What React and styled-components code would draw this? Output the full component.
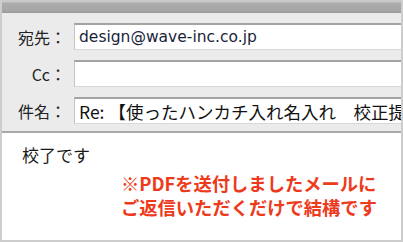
import React from "react";
import styled, { createGlobalStyle } from "styled-components";

const GlobalStyle = createGlobalStyle`
  html, body {
    margin: 0;
    padding: 0;
    background: #fff;
  }
  body {
    font-family: "DejaVu Sans", "Noto Sans CJK JP", sans-serif;
  }
`;

const Frame = styled.div`
  width: 403px;
  height: 242px;
  box-sizing: border-box;
  border: 2px solid #cdcdcd;
  border-top: none;
  display: flex;
  flex-direction: column;
  overflow: hidden;
  background: #fff;
`;

const TitleBar = styled.div`
  height: 13px;
  flex-shrink: 0;
  margin: 0 -2px;
  background: linear-gradient(#c9c9c9 0, #c9c9c9 2px, #acacac 3px, #a6a6a6 11px, #979797 13px);
`;

const Header = styled.div`
  background: #ebebeb;
  padding: 10px 0 7px;
  display: flex;
  flex-direction: column;
  gap: 10px;
  border-bottom: 2px solid #a9a9a9;
`;

const Row = styled.div`
  display: flex;
  align-items: center;
  height: 27px;
`;

const Label = styled.div`
  width: 64px;
  flex-shrink: 0;
  text-align: right;
  font-family: "Noto Sans CJK JP", sans-serif;
  font-size: 16px;
  color: #222;
  padding-right: 8px;
`;

const Field = styled.div`
  flex: 1;
  height: 27px;
  box-sizing: border-box;
  background: #fff;
  border-top: 2px solid #a3a3a3;
  border-left: 1px solid #c4c4c4;
  border-bottom: 1px solid #d8d8d8;
  padding-left: 4px;
  display: flex;
  align-items: center;
  white-space: nowrap;
  overflow: hidden;
  font-size: ${(p) => (p.jp ? "17.5px" : "15.5px")};
  font-family: ${(p) =>
    p.jp ? '"Noto Sans CJK JP", sans-serif' : '"DejaVu Sans", sans-serif'};
  color: ${(p) => (p.jp ? "#111" : "#1a1f3a")};
`;

const Body = styled.div`
  flex: 1;
  padding: 10px 0 0 20px;
  font-family: "Noto Sans CJK JP", sans-serif;
`;

const Greeting = styled.div`
  font-size: 17px;
  color: #1a1a1a;
  line-height: 24px;
`;

const Note = styled.div`
  margin: 4px 0 0 99px;
  font-size: 18.3px;
  font-weight: bold;
  line-height: 24px;
  color: #ee3a1c;
  white-space: nowrap;
`;

export default function App() {
  return (
    <>
      <GlobalStyle />
      <Frame>
        <TitleBar />
        <Header>
          <Row>
            <Label>宛先：</Label>
            <Field>design@wave-inc.co.jp</Field>
          </Row>
          <Row>
            <Label>Cc：</Label>
            <Field />
          </Row>
          <Row>
            <Label>件名：</Label>
            <Field jp>Re: 【使ったハンカチ入れ名入れ　校正提出】</Field>
          </Row>
        </Header>
        <Body>
          <Greeting>校了です</Greeting>
          <Note>
            ※PDFを送付しましたメールに
            <br />
            ご返信いただくだけで結構です
          </Note>
        </Body>
      </Frame>
    </>
  );
}
